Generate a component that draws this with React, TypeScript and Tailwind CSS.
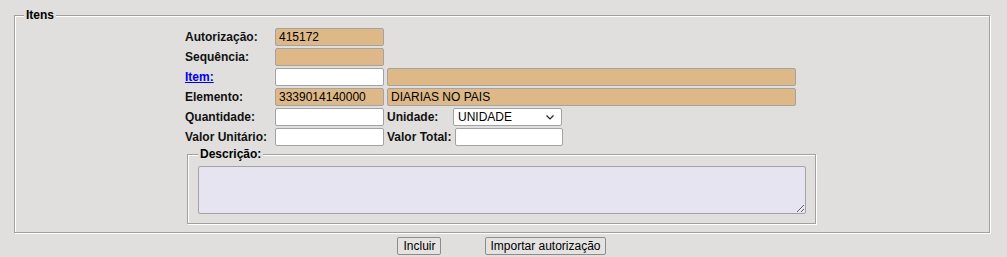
import React from "react";

const fieldBox =
  "h-[18px] border border-[#a3a3a3] rounded-[2px] px-[3px] text-[12px] text-black outline-none";

const Label = ({ children, w }: { children: React.ReactNode; w: string }) => (
  <span className={`${w} font-bold text-[12px] text-[#111]`}>{children}</span>
);

const App = () => {
  return (
    <div className="min-h-screen bg-[#e0dfdd] pt-[8px] font-['Liberation_Sans',Arial,sans-serif] text-black">
      {/* ITENS */}
      <fieldset className="ml-[14px] w-[976px] border border-[#a0a0a0] shadow-[inset_1px_1px_0_#fff,1px_1px_0_#fff] pb-[8px]">
        <legend className="ml-[9px] px-[2px] bg-[#e0dfdd] font-bold text-[12px] leading-[14px]">Itens</legend>

        <div className="ml-[170px] mt-[5px] flex flex-col">
          <div className="h-[20px] flex items-center">
            <Label w="w-[90px]">Autorização:</Label>
            <input className={`${fieldBox} w-[109px] bg-[#deb887]`} defaultValue="415172" readOnly />
          </div>
          <div className="h-[20px] flex items-center">
            <Label w="w-[90px]">Sequência:</Label>
            <input className={`${fieldBox} w-[109px] bg-[#deb887]`} readOnly />
          </div>
          <div className="h-[20px] flex items-center">
            <span className="w-[90px] font-bold text-[12px]">
              <a href="#" className="text-[#0000ee] underline">Item:</a>
            </span>
            <input className={`${fieldBox} w-[109px] bg-white`} />
            <input className={`${fieldBox} ml-[3px] w-[409px] bg-[#deb887]`} readOnly />
          </div>
          <div className="h-[20px] flex items-center">
            <Label w="w-[90px]">Elemento:</Label>
            <input className={`${fieldBox} w-[109px] bg-[#deb887]`} defaultValue="3339014140000" readOnly />
            <input className={`${fieldBox} ml-[3px] w-[409px] bg-[#deb887]`} defaultValue="DIARIAS NO PAIS" readOnly />
          </div>
          <div className="h-[20px] flex items-center">
            <Label w="w-[90px]">Quantidade:</Label>
            <input className={`${fieldBox} w-[109px] bg-white`} />
            <Label w="ml-[3px] w-[66px]">Unidade:</Label>
            <div className="relative w-[109px] h-[18px]">
              <select className="block appearance-none w-full h-[18px] py-0 leading-[16px] border border-[#a3a3a3] rounded-[2px] bg-white pl-[4px] text-[12px] outline-none">
                <option>UNIDADE</option>
              </select>
              <svg className="absolute right-[8px] top-[7px] pointer-events-none" width="8" height="5" viewBox="0 0 8 5">
                <path d="M0.5 0.5 L4 4 L7.5 0.5" fill="none" stroke="#222" strokeWidth="1.2" />
              </svg>
            </div>
          </div>
          <div className="h-[20px] flex items-center">
            <Label w="w-[90px]">Valor Unitário:</Label>
            <input className={`${fieldBox} w-[109px] bg-white`} />
            <Label w="ml-[3px] w-[68px]">Valor Total:</Label>
            <input className={`${fieldBox} w-[108px] bg-white`} />
          </div>
        </div>

        {/* DESCRICAO */}
        <fieldset className="ml-[172px] w-[629px] border border-[#a0a0a0] shadow-[inset_1px_1px_0_#fff,1px_1px_0_#fff] pb-[9px]">
          <legend className="ml-[10px] px-[2px] bg-[#e0dfdd] font-bold text-[12px] leading-[14px]">Descrição:</legend>
          <textarea className="block ml-[10px] mt-[5px] w-[608px] h-[48px] border border-[#a3a3a3] rounded-[2px] bg-[#e5e4f0] text-[12px] outline-none resize" />
        </fieldset>
      </fieldset>

      {/* BUTTONS */}
      <div className="mt-[4px] flex justify-center gap-[44px] pr-[4px]">
        <button className="h-[18px] px-[5px] border border-[#8c8c8c] rounded-[2px] bg-[#e4e3e1] text-[12px] leading-none">Incluir</button>
        <button className="h-[18px] px-[4px] border border-[#8c8c8c] rounded-[2px] bg-[#e4e3e1] text-[12px] leading-none">Importar autorização</button>
      </div>
    </div>
  );
};

export default App;
